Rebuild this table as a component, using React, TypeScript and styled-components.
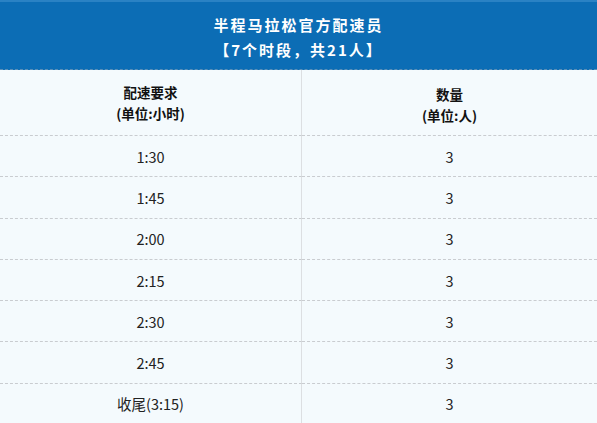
import React from "react"
import styled, { createGlobalStyle } from "styled-components"

const rows = [
  { pace: "1:30", count: 3 },
  { pace: "1:45", count: 3 },
  { pace: "2:00", count: 3 },
  { pace: "2:15", count: 3 },
  { pace: "2:30", count: 3 },
  { pace: "2:45", count: 3 },
  { pace: "收尾(3:15)", count: 3 },
]

const GlobalStyle = createGlobalStyle`
  html, body {
    margin: 0;
    padding: 0;
    background: #f4fafd;
    font-family: "Noto Sans CJK SC", "Noto Sans", sans-serif;
  }
`

const Wrap = styled.div`
  width: 597px;
  height: 423px;
  overflow: hidden;
  background: #f4fafd;
`

const Banner = styled.div`
  height: 70px;
  box-sizing: border-box;
  padding-top: 10px;
  background: #0c6db5;
  border-top: 2px solid #2a82c4;
  border-bottom: 1px dashed #5a8fb8;
  color: #fff;
  text-align: center;
  font-weight: 700;
  font-size: 15px;
  line-height: 25px;
  letter-spacing: 2px;
`

const Table = styled.div`
  display: grid;
  grid-template-columns: 302px 1fr;
`

const Cell = styled.div<{ $head?: boolean; $h: number }>`
  height: ${(p) => p.$h}px;
  box-sizing: border-box;
  display: flex;
  flex-direction: column;
  align-items: center;
  justify-content: center;
  border-bottom: 1px dashed #c9ccd0;
  color: ${(p) => (p.$head ? "#111" : "#222")};
  font-size: ${(p) => (p.$head ? 13.5 : 14.5)}px;
  font-weight: ${(p) => (p.$head ? 700 : 400)};
  line-height: 21px;

  &:nth-child(odd) {
    border-right: 1px solid #dcdfe2;
  }
`

const App: React.FC = () => {
  return (
    <Wrap>
      <GlobalStyle />
      <Banner>
        <div>半程马拉松官方配速员</div>
        <div>【7个时段，共21人】</div>
      </Banner>
      <Table>
        <Cell $head $h={66}>
          <div>配速要求</div>
          <div>(单位:小时)</div>
        </Cell>
        <Cell $head $h={66}>
          <div style={{ marginTop: 4 }}>数量</div>
          <div>(单位:人)</div>
        </Cell>
        {rows.map((r) => (
          <React.Fragment key={r.pace}>
            <Cell $h={41.3}>{r.pace}</Cell>
            <Cell $h={41.3}>{r.count}</Cell>
          </React.Fragment>
        ))}
      </Table>
    </Wrap>
  )
}

export default App
